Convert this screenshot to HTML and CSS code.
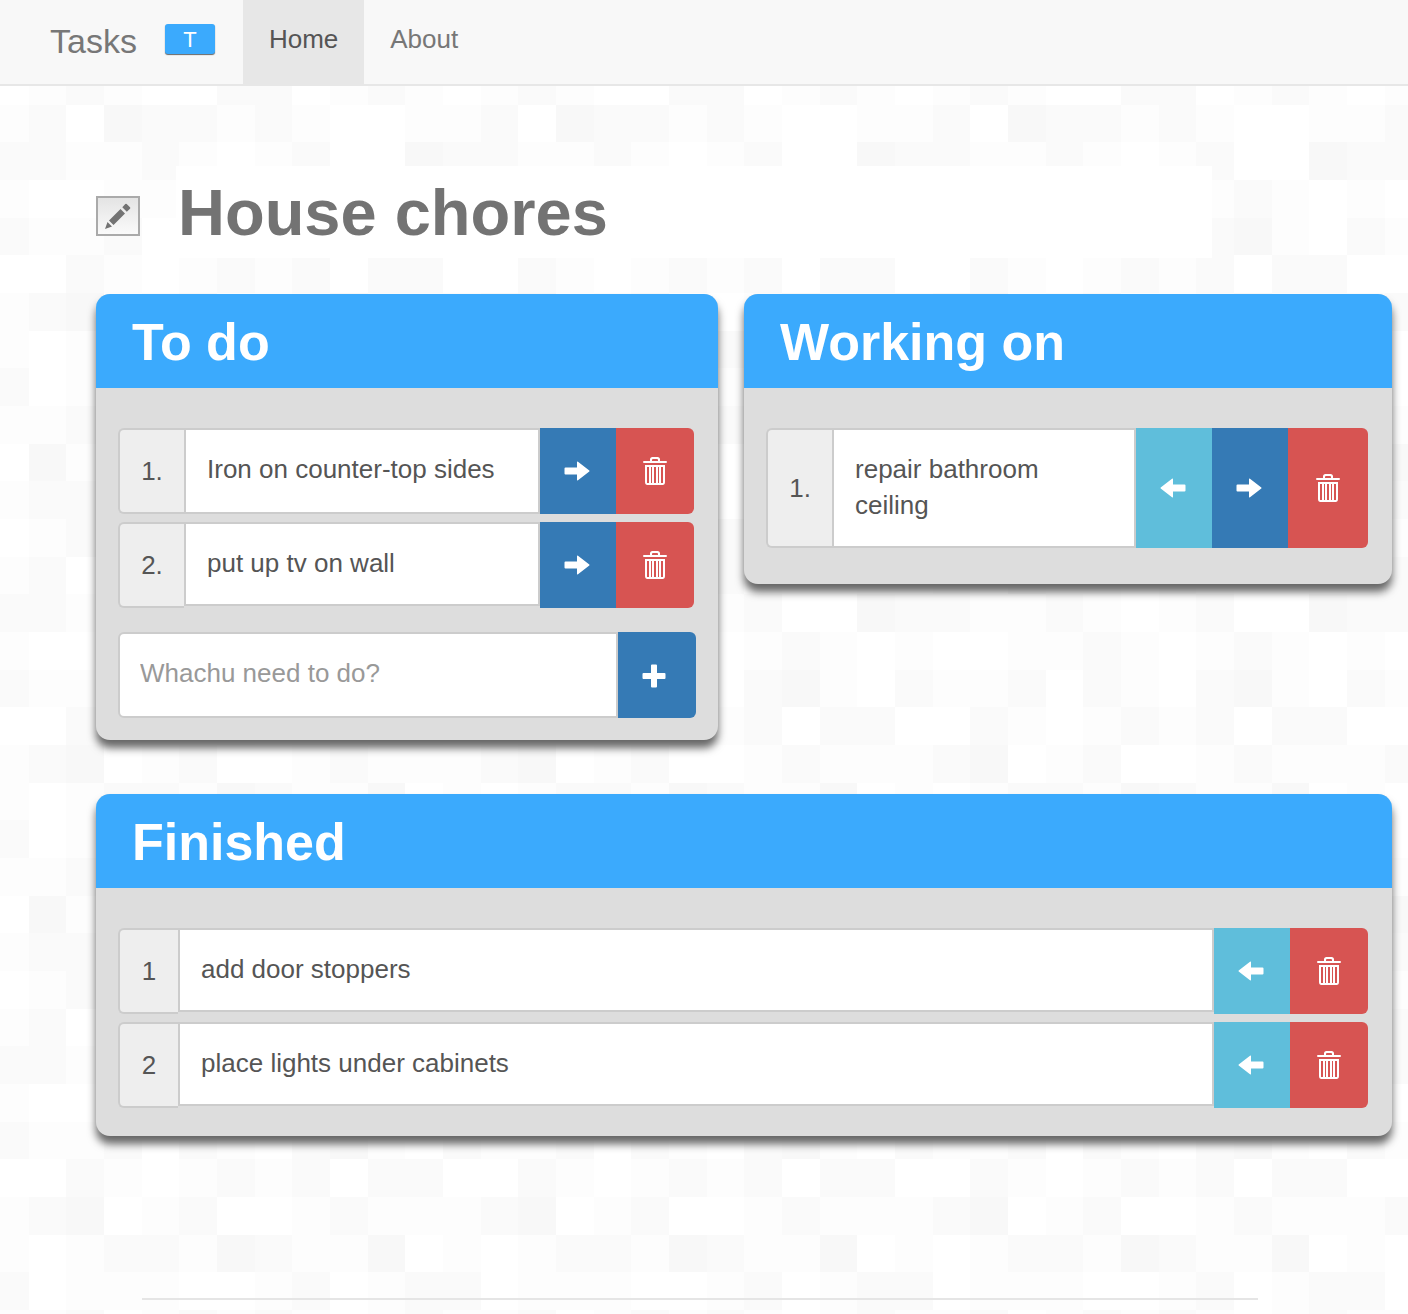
FILE: index.html
```html
<!DOCTYPE html>
<html lang="en">
<head>
<meta charset="utf-8">
<meta name="viewport" content="width=device-width, initial-scale=1">
<title>Tasks</title>
<link rel="stylesheet" href="styles.css">
</head>
<body>
<svg class="sprite" aria-hidden="true">
  <symbol id="right" viewBox="0 0 26 20"><path d="M1.5 6.5H13V1.2Q13 0 14 .8L25.3 9.5Q25.8 10 25.3 10.5L14 19.2Q13 20 13 18.8V13.5H1.5Q.5 13.5 .5 12.5V7.5Q.5 6.5 1.5 6.5Z"/></symbol>
  <symbol id="left" viewBox="0 0 26 20"><path d="M24.5 6.5H13V1.2Q13 0 12 .8L.7 9.5Q.2 10 .7 10.5L12 19.2Q13 20 13 18.8V13.5H24.5Q25.5 13.5 25.5 12.5V7.5Q25.5 6.5 24.5 6.5Z"/></symbol>
  <symbol id="plus" viewBox="0 0 24 24"><path d="M10 .5H14Q15 .5 15 1.5V9H22.5Q23.5 9 23.5 10V14Q23.5 15 22.5 15H15V22.5Q15 23.5 14 23.5H10Q9 23.5 9 22.5V15H1.5Q.5 15 .5 14V10Q.5 9 1.5 9H9V1.5Q9 .5 10 .5Z"/></symbol>
  <symbol id="trash" viewBox="0 0 24 28"><path fill-rule="evenodd" d="M1 4H7V2.500Q7 0 9.500 0H14.500Q17 0 17 2.500V4H23Q24 4 24 5T23 6H1Q0 6 0 5T1 4ZM9 4H15V3Q15 2 14 2H10Q9 2 9 3ZM2 8H22V25Q22 28 19.500 28H4.500Q2 28 2 25ZM4 10V26H6V10ZM8 10V26H9V10ZM11 10V26H13V10ZM15 10V26H16V10ZM18 10V26H20V10Z"/></symbol>
  <symbol id="pencil" viewBox="0 0 26 26"><path d="M0 26 2.500 19 7 23.500ZM4 17.500 15.500 6 20 10.500 8.500 22ZM17.300 4.200 20.300 1Q21 .3 21.700 1L25 4.300Q25.700 5 25 5.700L21.800 8.700Z"/></symbol>
</svg>

<nav class="navbar">
  <a class="navbar__brand" href="#">Tasks <span class="badge">T</span></a>
  <a class="navbar__link navbar__link--active" href="#">Home</a>
  <a class="navbar__link" href="#about">About</a>
</nav>

<main class="board">
  <header class="board__head">
    <button class="edit" type="button" aria-label="Edit title"><svg class="icon-pencil"><use href="#pencil"/></svg></button>
    <h1 class="board__title">House chores</h1>
  </header>

  <div class="columns">
    <section class="panel">
      <h2 class="panel__title">To do</h2>
      <div class="panel__body panel__body--form">
        <ol class="tasks">
          <li class="task">
            <span class="task__number">1.</span>
            <span class="task__text task__text--full">Iron on counter-top sides</span>
            <button class="btn btn--primary" type="button" aria-label="Move forward"><svg class="icon-arrow"><use href="#right"/></svg></button>
            <button class="btn btn--danger" type="button" aria-label="Delete"><svg class="icon-trash"><use href="#trash"/></svg></button>
          </li>
          <li class="task">
            <span class="task__number">2.</span>
            <span class="task__text">put up tv on wall</span>
            <button class="btn btn--primary" type="button" aria-label="Move forward"><svg class="icon-arrow"><use href="#right"/></svg></button>
            <button class="btn btn--danger" type="button" aria-label="Delete"><svg class="icon-trash"><use href="#trash"/></svg></button>
          </li>
        </ol>
        <form class="add">
          <input class="add__input" type="text" placeholder="Whachu need to do?" aria-label="New task">
          <button class="btn btn--primary btn--last" type="button" aria-label="Add task"><svg class="icon-plus"><use href="#plus"/></svg></button>
        </form>
      </div>
    </section>

    <section class="panel">
      <h2 class="panel__title">Working on</h2>
      <div class="panel__body panel__body--roomy">
        <ol class="tasks">
          <li class="task">
            <span class="task__number">1.</span>
            <span class="task__text">repair bathroom ceiling</span>
            <button class="btn btn--info" type="button" aria-label="Move back"><svg class="icon-arrow"><use href="#left"/></svg></button>
            <button class="btn btn--primary" type="button" aria-label="Move forward"><svg class="icon-arrow"><use href="#right"/></svg></button>
            <button class="btn btn--danger btn--wide" type="button" aria-label="Delete"><svg class="icon-trash"><use href="#trash"/></svg></button>
          </li>
        </ol>
      </div>
    </section>
  </div>

  <section class="panel">
    <h2 class="panel__title">Finished</h2>
    <div class="panel__body">
      <ol class="tasks">
        <li class="task">
          <span class="task__number task__number--narrow">1</span>
          <span class="task__text">add door stoppers</span>
          <button class="btn btn--info" type="button" aria-label="Move back"><svg class="icon-arrow"><use href="#left"/></svg></button>
          <button class="btn btn--danger" type="button" aria-label="Delete"><svg class="icon-trash"><use href="#trash"/></svg></button>
        </li>
        <li class="task">
          <span class="task__number task__number--narrow">2</span>
          <span class="task__text">place lights under cabinets</span>
          <button class="btn btn--info" type="button" aria-label="Move back"><svg class="icon-arrow"><use href="#left"/></svg></button>
          <button class="btn btn--danger" type="button" aria-label="Delete"><svg class="icon-trash"><use href="#trash"/></svg></button>
        </li>
      </ol>
    </div>
  </section>
</main>
<hr class="rule">
</body>
</html>
```
FILE: styles.css
```css
* { box-sizing: border-box; }

body {
  margin: 0;
  color: #555;
  font: 26px/36px "Liberation Sans", Arial, sans-serif;
  background-color: #fdfdfd;
  /* Faint checkered texture, 12 by 12 cells per tile */
  background-image: url("data:image/svg+xml,%3Csvg xmlns='http://www.w3.org/2000/svg' viewBox='0 0 12 12' shape-rendering='crispEdges'%3E%3Cpath fill='%23fdfdfd' d='M0 0h12v12H0z'/%3E%3Cpath fill='%23ffffff' d='M0 0h1v1H0zM4 0h2v1H4zM8 0h1v1H8zM2 1h1v1H2zM9 1h2v2H9zM6 2h1v1H6zM1 3h2v1H1zM7 3h1v2H7zM11 3h1v2h-1zM4 4h1v2H4zM0 5h2v1H0zM9 5h1v1H9zM3 6h1v1H3zM6 6h2v1H6zM11 7h1v1h-1zM1 7h1v2H1zM5 8h2v1H5zM9 8h1v2H9zM3 9h1v1H3zM0 10h1v1H0zM7 10h1v2H7zM4 11h2v1H4zM10 11h1v1h-1z'/%3E%3Cpath fill='%23fafafa' d='M2 0h1v1H2zM6 0h2v1H6zM10 0h1v1h-1zM1 1h1v1H1zM3 1h3v1H3zM7 1h1v1H7zM0 2h2v1H0zM4 2h1v1H4zM8 2h1v1H8zM5 3h1v2H5zM9 3h1v1H9zM3 4h1v1H3zM0 4h1v1H0zM8 4h1v2H8zM2 5h1v1H2zM6 5h1v1H6zM10 5h2v1h-2zM1 6h1v1H1zM5 6h1v1H5zM9 6h1v1H9zM3 7h2v1H3zM7 7h1v1H7zM0 8h1v1H0zM8 8h1v1H8zM11 8h1v2h-1zM2 9h1v1H2zM5 9h1v1H5zM7 9h1v1H7zM3 10h1v1H3zM9 10h2v1H9zM1 11h2v1H1zM6 11h1v1H6zM11 11h1v1h-1z'/%3E%3Cpath fill='%23f8f8f8' d='M3 1h1v1H3zM11 2h1v1h-1zM9 4h1v1H9zM2 6h1v1H2zM6 7h1v1H6zM10 7h1v1h-1zM1 10h1v1H1zM5 10h1v1H5z'/%3E%3C/svg%3E");
  background-size: 452px 452px;
  background-position: -9px 67px;
}

.sprite { display: none; }
a { color: inherit; text-decoration: none; }
h1, h2, ol { margin: 0; padding: 0; }

.navbar {
  display: flex;
  padding-left: 50px;
  color: #777;
  background: #f8f8f8;
  border-bottom: 2px solid #e7e7e7;
}
.navbar__brand {
  display: flex;
  gap: 28px;
  margin-right: 28px;
  font-size: 34px;
  line-height: 82px;
}
.badge {
  width: 50px;
  height: 30px;
  margin-top: 24px;
  color: #fff;
  font-size: 22px;
  line-height: 32px;
  text-align: center;
  background: #3baafd;
  border-radius: 3px;
  box-shadow: 0 1px 1px #666;
}
.navbar__link {
  padding: 21px 26px 27px;
}
.navbar__link--active { color: #555; background: #e7e7e7; }

.board {
  display: grid;
  gap: 36px;
  padding: 80px 16px 0 96px;
}
.board__head {
  display: flex;
  align-items: center;
  gap: 36px;
}
.edit {
  display: grid;
  place-items: center;
  width: 44px;
  height: 40px;
  margin-top: 8px;
  padding: 0;
  background: linear-gradient(#e4e4e4, #fafafa);
  border: 2px solid #aaa;
  fill: #737373;
}
.board__title {
  flex: 1;
  margin-right: 180px;
  padding: 2px 0 0 2px;
  color: #737373;
  font-size: 65px;
  line-height: 90px;
  background: #fff;
}

.columns {
  display: grid;
  grid-template-columns: 24fr 25fr;
  align-items: start;
  gap: 26px;
  margin-bottom: 18px;
}
.panel {
  overflow: hidden;
  background: #ddd;
  border-radius: 14px;
  box-shadow: 0 8px 8px #666;
}
.panel__title {
  padding: 2px 36px 0;
  color: #fff;
  font-size: 52px;
  line-height: 92px;
  background: #3baafd;
}
.panel__body { padding: 40px 22px 28px; }
.panel__body--form { padding-bottom: 22px; }
.panel__body--roomy { padding-bottom: 36px; }

.tasks {
  display: grid;
  gap: 8px;
  padding-right: 2px;
  list-style: none;
}
.task {
  display: flex;
  min-height: 86px;
}
.task__number {
  display: grid;
  place-items: center;
  flex: none;
  width: 66px;
  background: #eee;
  border: 2px solid #ccc;
  border-right: 0;
  border-radius: 6px 0 0 6px;
}
.task__number--narrow { width: 60px; }
.task__text {
  flex: 1;
  align-self: flex-start;
  padding: 21px 40px 23px 21px;
  background: #fff;
  border: 2px solid #ccc;
}
.task__text--full { align-self: stretch; }

.btn {
  display: grid;
  place-items: center;
  flex: none;
  width: 76px;
  padding: 0 2px 0 0;
  border: 0;
  fill: #fff;
}
.btn--primary { background: #357ab5; }
.btn--info { background: #5fbedb; }
.btn--danger { width: 78px; padding: 0; background: #d75452; border-radius: 0 6px 6px 0; }
.btn--wide { width: 80px; }
.btn--last { width: 78px; padding: 2px 6px 0 0; border-radius: 0 6px 6px 0; }

.add {
  display: flex;
  height: 86px;
  margin-top: 24px;
}
.add__input {
  flex: 1;
  min-width: 0;
  padding: 0 20px 4px;
  color: #555;
  font: inherit;
  background: #fff;
  border: 2px solid #ccc;
  border-radius: 6px 0 0 6px;
}
.add__input::placeholder { color: #999; }

.icon-arrow { width: 26px; height: 20px; }
.icon-trash { width: 24px; height: 28px; }
.icon-plus { width: 24px; height: 24px; }
.icon-pencil { width: 26px; height: 26px; }

.rule {
  margin: 162px 150px 14px 142px;
  border: 0;
  border-top: 2px solid #e5e5e5;
}
```
